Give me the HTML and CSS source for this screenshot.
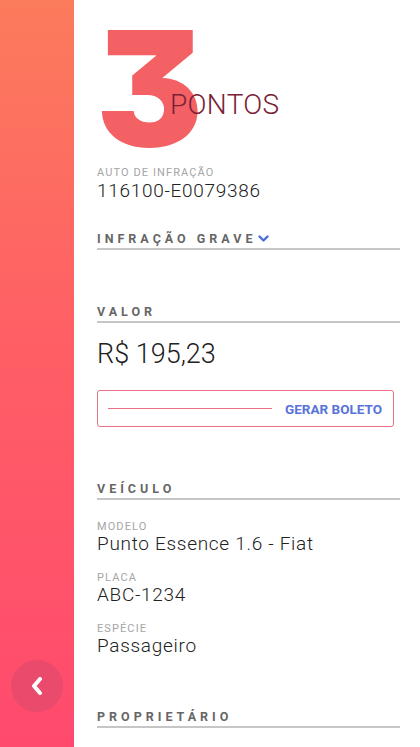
FILE: index.html
```html
<!DOCTYPE html>
<html lang="pt-BR">
<head>
    <meta charset="UTF-8">
    <meta name="viewport" content="width=device-width, initial-scale=1.0">
    <title>Infração | Detalhes</title>
    <link rel="stylesheet" href="styles.css">
</head>
<body>
    <div class="sidebar">
        <div class="back">
            <svg width="14" height="18" viewBox="0 0 14 18"><polyline points="10,2 4,9 10,16" fill="none" stroke="#fff" stroke-width="4" stroke-linecap="round" stroke-linejoin="round"/></svg>
        </div>
    </div>
    <div class="main">
        <div class="score">
            <span class="num">3</span>
            <span class="unit">PONTOS</span>
        </div>

        <div class="field auto">
            <div class="label">AUTO DE INFRAÇÃO</div>
            <div class="value">116100-E0079386</div>
        </div>

        <div class="section grave">INFRAÇÃO GRAVE
            <svg class="chev" width="11" height="8" viewBox="0 0 11 8"><polyline points="1.5,1.5 5.5,5.5 9.5,1.5" fill="none" stroke="#4a6be0" stroke-width="2.4" stroke-linecap="round" stroke-linejoin="round"/></svg>
        </div>

        <div class="section valor">VALOR</div>
        <div class="price">R$ 195,23</div>
        <div class="boleto">
            <span class="fill"></span>
            <span class="gerar">GERAR BOLETO</span>
        </div>

        <div class="section veiculo">VEÍCULO</div>
        <div class="field first">
            <div class="label">MODELO</div>
            <div class="value">Punto Essence 1.6 - Fiat</div>
        </div>
        <div class="field">
            <div class="label">PLACA</div>
            <div class="value">ABC-1234</div>
        </div>
        <div class="field">
            <div class="label">ESPÉCIE</div>
            <div class="value">Passageiro</div>
        </div>

        <div class="section dono">PROPRIETÁRIO</div>
    </div>
</body>
</html>
```

FILE: styles.css
```css
html,body{margin:0;padding:0;height:100%;width:100%;}
body{
    display: flex;
    overflow: hidden;
    background: #fff;
    font-family: Roboto, "Liberation Sans", sans-serif;
    color: #222;
}
.sidebar{
    width: 74px;
    flex-shrink: 0;
    background: linear-gradient(180deg, #fb7b5c 0%, #ff5f65 45%, #ff4a6e 100%);
    display: flex;
    flex-direction: column;
    justify-content: flex-end;
    align-items: center;
    padding-bottom: 35px;
    box-sizing: border-box;
}
.back{
    width: 52px;
    height: 52px;
    border-radius: 50%;
    background: #ea4a6b;
    display: flex;
    align-items: center;
    justify-content: center;
}
.main{
    flex: 1;
    padding: 0 20px 0 23px;
    display: flex;
    flex-direction: column;
}
.score{display: flex;align-items: flex-end;margin-top: 30px;}
.num{
    font-family: Inter, sans-serif;
    font-weight: 900;
    font-size: 160px;
    line-height: 0.726;
    color: #f46165;
    font-feature-settings: "cv09";
    margin-left: -1px;
}
.unit{
    font-weight: 300;
    font-size: 28px;
    line-height: 1;
    color: #7a2136;
    margin-left: -33px;
    margin-bottom: 27px;
    letter-spacing: 0.3px;
}
.field{margin-top: 17px;}
.field.first{margin-top: 20px;}
.field.auto{margin-top: 20px;}
.label{font-size: 11px;line-height: 14px;letter-spacing: 1.1px;color: #a5a5a5;}
.value{font-size: 19px;font-weight: 300;line-height: 20px;letter-spacing: 0.7px;}
.auto .value{line-height: 22px;}
.section{
    font-size: 12.5px;
    font-weight: 700;
    letter-spacing: 4px;
    color: #666;
    line-height: 14px;
    padding-bottom: 2px;
    border-bottom: 2px solid #c6c6c6;
    display: flex;
    align-items: center;
}
.chev{margin-left: 2px;}
.grave{margin-top: 30px;}
.valor{margin-top: 55px;}
.veiculo{margin-top: 55px;}
.dono{margin-top: 54px;}
.price{font-size: 27px;font-weight: 300;line-height: 32px;margin-top: 15px;}
.boleto{
    margin-top: 20px;
    margin-right: 6px;
    height: 35px;
    border: 1px solid #ea7085;
    border-radius: 3px;
    display: flex;
    align-items: center;
    padding: 0 11px 0 10px;
}
.fill{flex: 1;height: 1px;background: #ea7085;margin-right: 13px;}
.gerar{font-size: 13.5px;font-weight: 700;color: #5874da;}
```
